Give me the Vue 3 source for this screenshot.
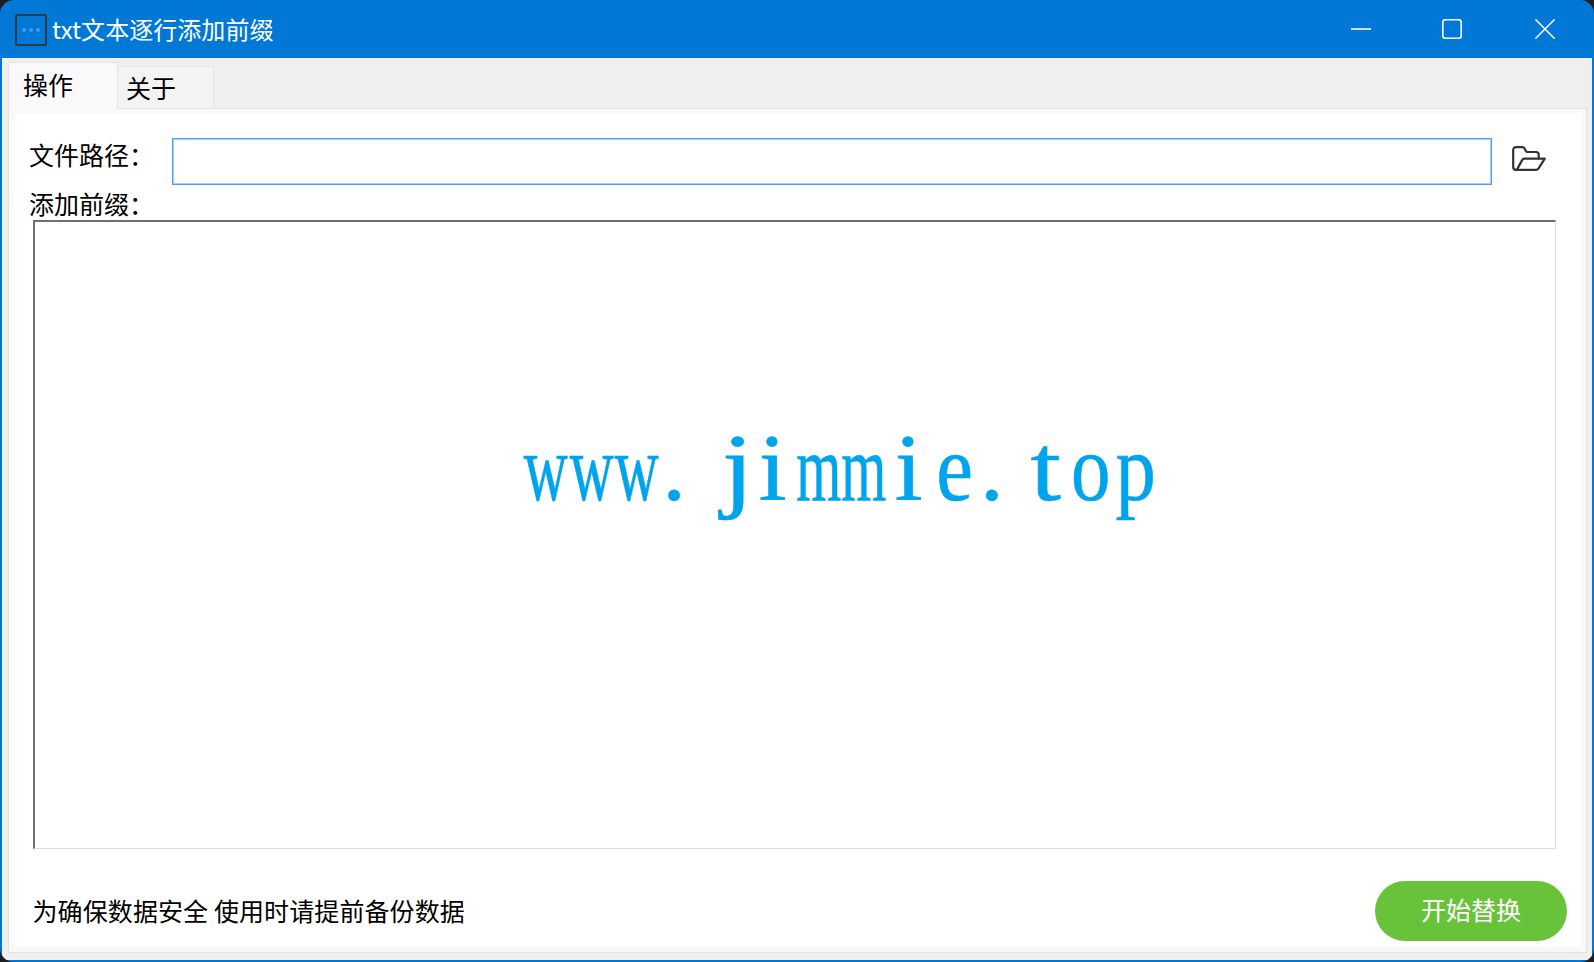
<script setup>
const tabs = [
  { label: '操作', active: true },
  { label: '关于', active: false },
]
// Narrowing factors and nudges that turn the proportional serif into an even 45px pitch
const shape = {
  w: [0.64, 0], m: [0.61, 0], e: [0.87, 0], o: [0.83, 0], p: [0.85, 0],
  t: [1.15, 0], j: [1.2, 10], i: [1.05, 0], '.': [1, -8],
}
const letters = 'www.jimmie.top'.split('').map((ch) => ({
  ch,
  transform: `translateX(${shape[ch][1]}px) scaleX(${shape[ch][0]})`,
}))
</script>

<template>
  <div class="window">
    <header class="titlebar">
      <div class="app-icon"><i></i><i></i><i></i></div>
      <div class="title">txt文本逐行添加前缀</div>
      <div class="controls">
        <button class="ctl">
          <svg width="20" height="20" viewBox="0 0 20 20"><path d="M0 10H20" stroke="#fff" stroke-width="1.6" fill="none" /></svg>
        </button>
        <button class="ctl">
          <svg width="20" height="20" viewBox="0 0 20 20"><rect x="0.8" y="0.8" width="18.4" height="18.4" rx="2.4" stroke="#fff" stroke-width="1.6" fill="none" /></svg>
        </button>
        <button class="ctl">
          <svg width="20" height="20" viewBox="0 0 20 20"><path d="M0.4 0.4L19.6 19.6M19.6 0.4L0.4 19.6" stroke="#fff" stroke-width="1.5" fill="none" /></svg>
        </button>
      </div>
    </header>

    <div class="body">
      <nav class="tabs">
        <div v-for="t in tabs" :key="t.label" class="tab" :class="{ active: t.active }">{{ t.label }}</div>
      </nav>
      <main class="pane">
        <div class="sheet">
          <div class="path-row">
            <label class="path-label">文件路径：</label>
            <div class="input"></div>
            <svg class="folder" width="34" height="25" viewBox="0 0 34 25" fill="none" stroke="#333" stroke-width="2.2" stroke-linejoin="round" stroke-linecap="round">
              <path d="M4 23.8C2.2 23.8 1.2 22.6 1.2 21V4C1.2 2.3 2.3 1.2 4 1.2H10.5C11.4 1.2 12 1.6 12.5 2.4L14 5.2C14.3 5.8 14.8 6 15.5 6H24C25.6 6 26.7 7 26.7 8.6V12.4" />
              <path d="M4 23.8C5 23.8 5.2 23 5.6 22.4L10 14.4C10.4 13.6 11 12.6 12.4 12.6H32.8L26.6 22.4C26 23.3 25.2 23.8 24 23.8H4Z" />
            </svg>
          </div>
          <div class="prefix-label">添加前缀：</div>
          <div class="editor">
            <div class="watermark">
              <span v-for="(l, i) in letters" :key="i" class="glyph" :style="{ transform: l.transform }">{{ l.ch }}</span>
            </div>
          </div>
          <footer class="footer">
            <span class="note">为确保数据安全 使用时请提前备份数据</span>
            <button class="start">开始替换</button>
          </footer>
        </div>
      </main>
    </div>
  </div>
</template>

<style>
html, body { margin: 0; background: #1e1e1e; }
</style>

<style scoped>
.window {
  width: 1594px;
  height: 962px;
  box-sizing: border-box;
  background: #0178d6;
  border-radius: 14px;
  padding: 0 2px 2px;
  display: flex;
  flex-direction: column;
  overflow: hidden;
  font-family: "Noto Sans CJK SC", "Noto Sans", sans-serif;
  color: #000;
}
.titlebar {
  height: 58px;
  flex: none;
  display: flex;
  align-items: center;
  padding-left: 13px;
  color: #fff;
}
.app-icon {
  width: 32px;
  height: 32px;
  box-sizing: border-box;
  border: 2px solid #2f3b46;
  border-radius: 2px;
  display: flex;
  align-items: center;
  justify-content: center;
  gap: 3px;
  margin-top: 1px;
}
.app-icon i { width: 4px; height: 4px; border-radius: 50%; background: #3f9bec; }
.title { font-size: 24px; line-height: 32px; margin-left: 5px; margin-top: -1px; letter-spacing: 0.05px; }
.controls { margin-left: auto; display: flex; padding-right: 1px; }
.ctl {
  width: 92px;
  height: 58px;
  padding: 0;
  border: 0;
  background: none;
  display: flex;
  align-items: center;
  justify-content: center;
}
.ctl:nth-child(1) { width: 88px; }
.ctl:nth-child(2) { width: 94px; }
.body {
  flex: 1;
  min-height: 0;
  background: #efefef;
  padding: 0 5px 7px 6px;
  display: flex;
  flex-direction: column;
}
.tabs {
  height: 51px;
  flex: none;
  display: flex;
  align-items: flex-end;
  margin-bottom: -1px;
}
.tab {
  box-sizing: border-box;
  width: 96px;
  height: 43px;
  border: 1px solid #e4e4e4;
  border-left: 0;
  background: #f3f3f3;
  font-size: 25px;
  line-height: 41px;
  padding-left: 8px;
}
.tab.active {
  width: 110px;
  height: 47px;
  border-left: 1px solid #e4e4e4;
  border-bottom: 0;
  background: #f9f9f9;
  line-height: 43px;
  padding-left: 14px;
  position: relative;
}
.pane {
  flex: 1;
  min-height: 0;
  box-sizing: border-box;
  border: 1px solid #e2e2e2;
  background: #f9f9f9;
  padding: 4px 5px 5px;
  display: flex;
}
.sheet {
  flex: 1;
  min-width: 0;
  background: #fff;
  display: flex;
  flex-direction: column;
}
.path-row {
  display: flex;
  align-items: flex-start;
  padding: 25px 0 0 15px;
}
.path-label {
  width: 143px;
  flex: none;
  font-size: 25px;
  line-height: 36px;
  margin-top: -2px;
}
.input {
  width: 1320px;
  height: 47px;
  box-sizing: border-box;
  border: 1px solid #4a9df8;
  box-shadow: inset 0 0 0 1px #a8d0fb;
  background: #fff;
}
.folder { margin: 8px 0 0 20px; }
.prefix-label {
  font-size: 25px;
  line-height: 32px;
  margin: 2px 0 1px 15px;
}
.editor {
  height: 629px;
  flex: none;
  box-sizing: border-box;
  margin: 0 25px 0 19px;
  border-style: solid;
  border-width: 2px 1px 1px 2px;
  border-color: #6e6e6e #dedede #dedede #6e6e6e;
  background: #fff;
  display: flex;
  align-items: center;
  justify-content: center;
}
.watermark {
  display: flex;
  font-family: "Liberation Serif", serif;
  font-size: 95px;
  line-height: 130px;
  color: #00a4ec;
  margin-left: 92px;
  margin-top: -134px;
  -webkit-text-stroke: 0.6px #00a4ec;
}
.glyph {
  width: 45.4px;
  display: flex;
  justify-content: center;
}
.footer {
  flex: 1;
  min-height: 0;
  display: flex;
  align-items: flex-end;
  justify-content: space-between;
  padding: 0 14px 6px 18.5px;
}
.note { font-size: 25px; line-height: 36px; margin-bottom: 13px; letter-spacing: 0.1px; }
.start {
  width: 192px;
  height: 60px;
  border: 0;
  border-radius: 30px;
  background: #69c33a;
  color: #fff;
  font-family: inherit;
  font-size: 25px;
  padding: 0 0 4px;
}
</style>
